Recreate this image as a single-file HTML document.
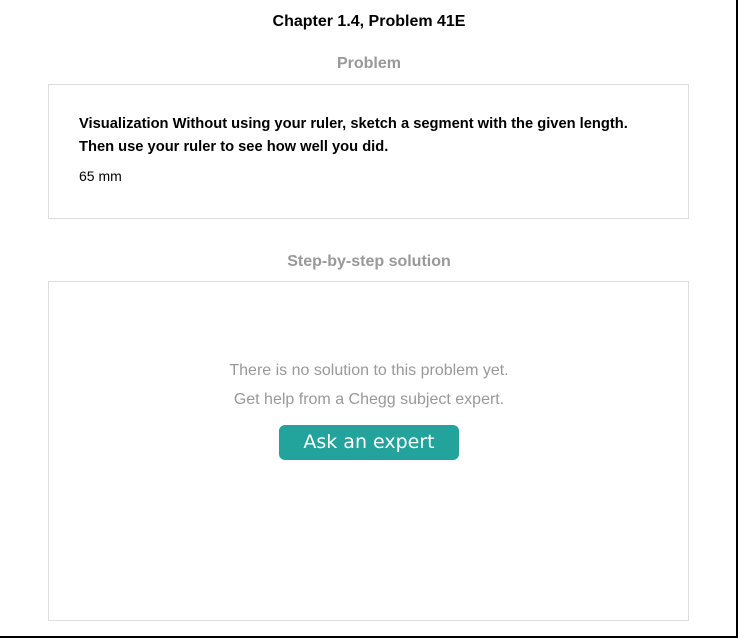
<!DOCTYPE html>
<html><head><style>
html,body{margin:0;padding:0;background:#fff;}
body{width:738px;height:638px;position:relative;overflow:hidden;font-family:"Liberation Sans",Arial,sans-serif;}
.rb{position:absolute;right:0;top:0;width:2px;height:638px;background:#000;}
.bb{position:absolute;left:0;bottom:0;width:738px;height:2px;background:#000;}
.t{position:absolute;left:0;width:738px;text-align:center;}
.box{position:absolute;left:48px;width:639px;border:1px solid #ddd;}
.p{position:absolute;left:79px;font-size:14.7px;font-weight:bold;color:#000;white-space:nowrap;}
.g{color:#999;font-size:16px;}
.btn{position:absolute;left:279px;top:425px;width:180px;height:35px;background:#22a39b;border-radius:6px;color:#fff;font-family:"DejaVu Sans",sans-serif;font-size:19px;text-align:center;line-height:34px;}
</style></head><body>
<div class="t" style="top:13px;font-size:16px;font-weight:bold;">Chapter 1.4, Problem 41E</div>
<div class="t g" style="top:55px;font-weight:bold;">Problem</div>
<div class="box" style="top:84px;height:133px;"></div>
<div class="p" style="top:116px;">Visualization Without using your ruler, sketch a segment with the given length.</div>
<div class="p" style="top:139px;">Then use your ruler to see how well you did.</div>
<div class="p" style="top:168px;font-weight:normal;font-size:14px;">65 mm</div>
<div class="t g" style="top:253px;font-weight:bold;">Step-by-step solution</div>
<div class="box" style="top:281px;height:338px;"></div>
<div class="t g" style="top:362px;">There is no solution to this problem yet.</div>
<div class="t g" style="top:391px;">Get help from a Chegg subject expert.</div>
<div class="btn">Ask an expert</div>
<div class="rb"></div><div class="bb"></div>
</body></html>
